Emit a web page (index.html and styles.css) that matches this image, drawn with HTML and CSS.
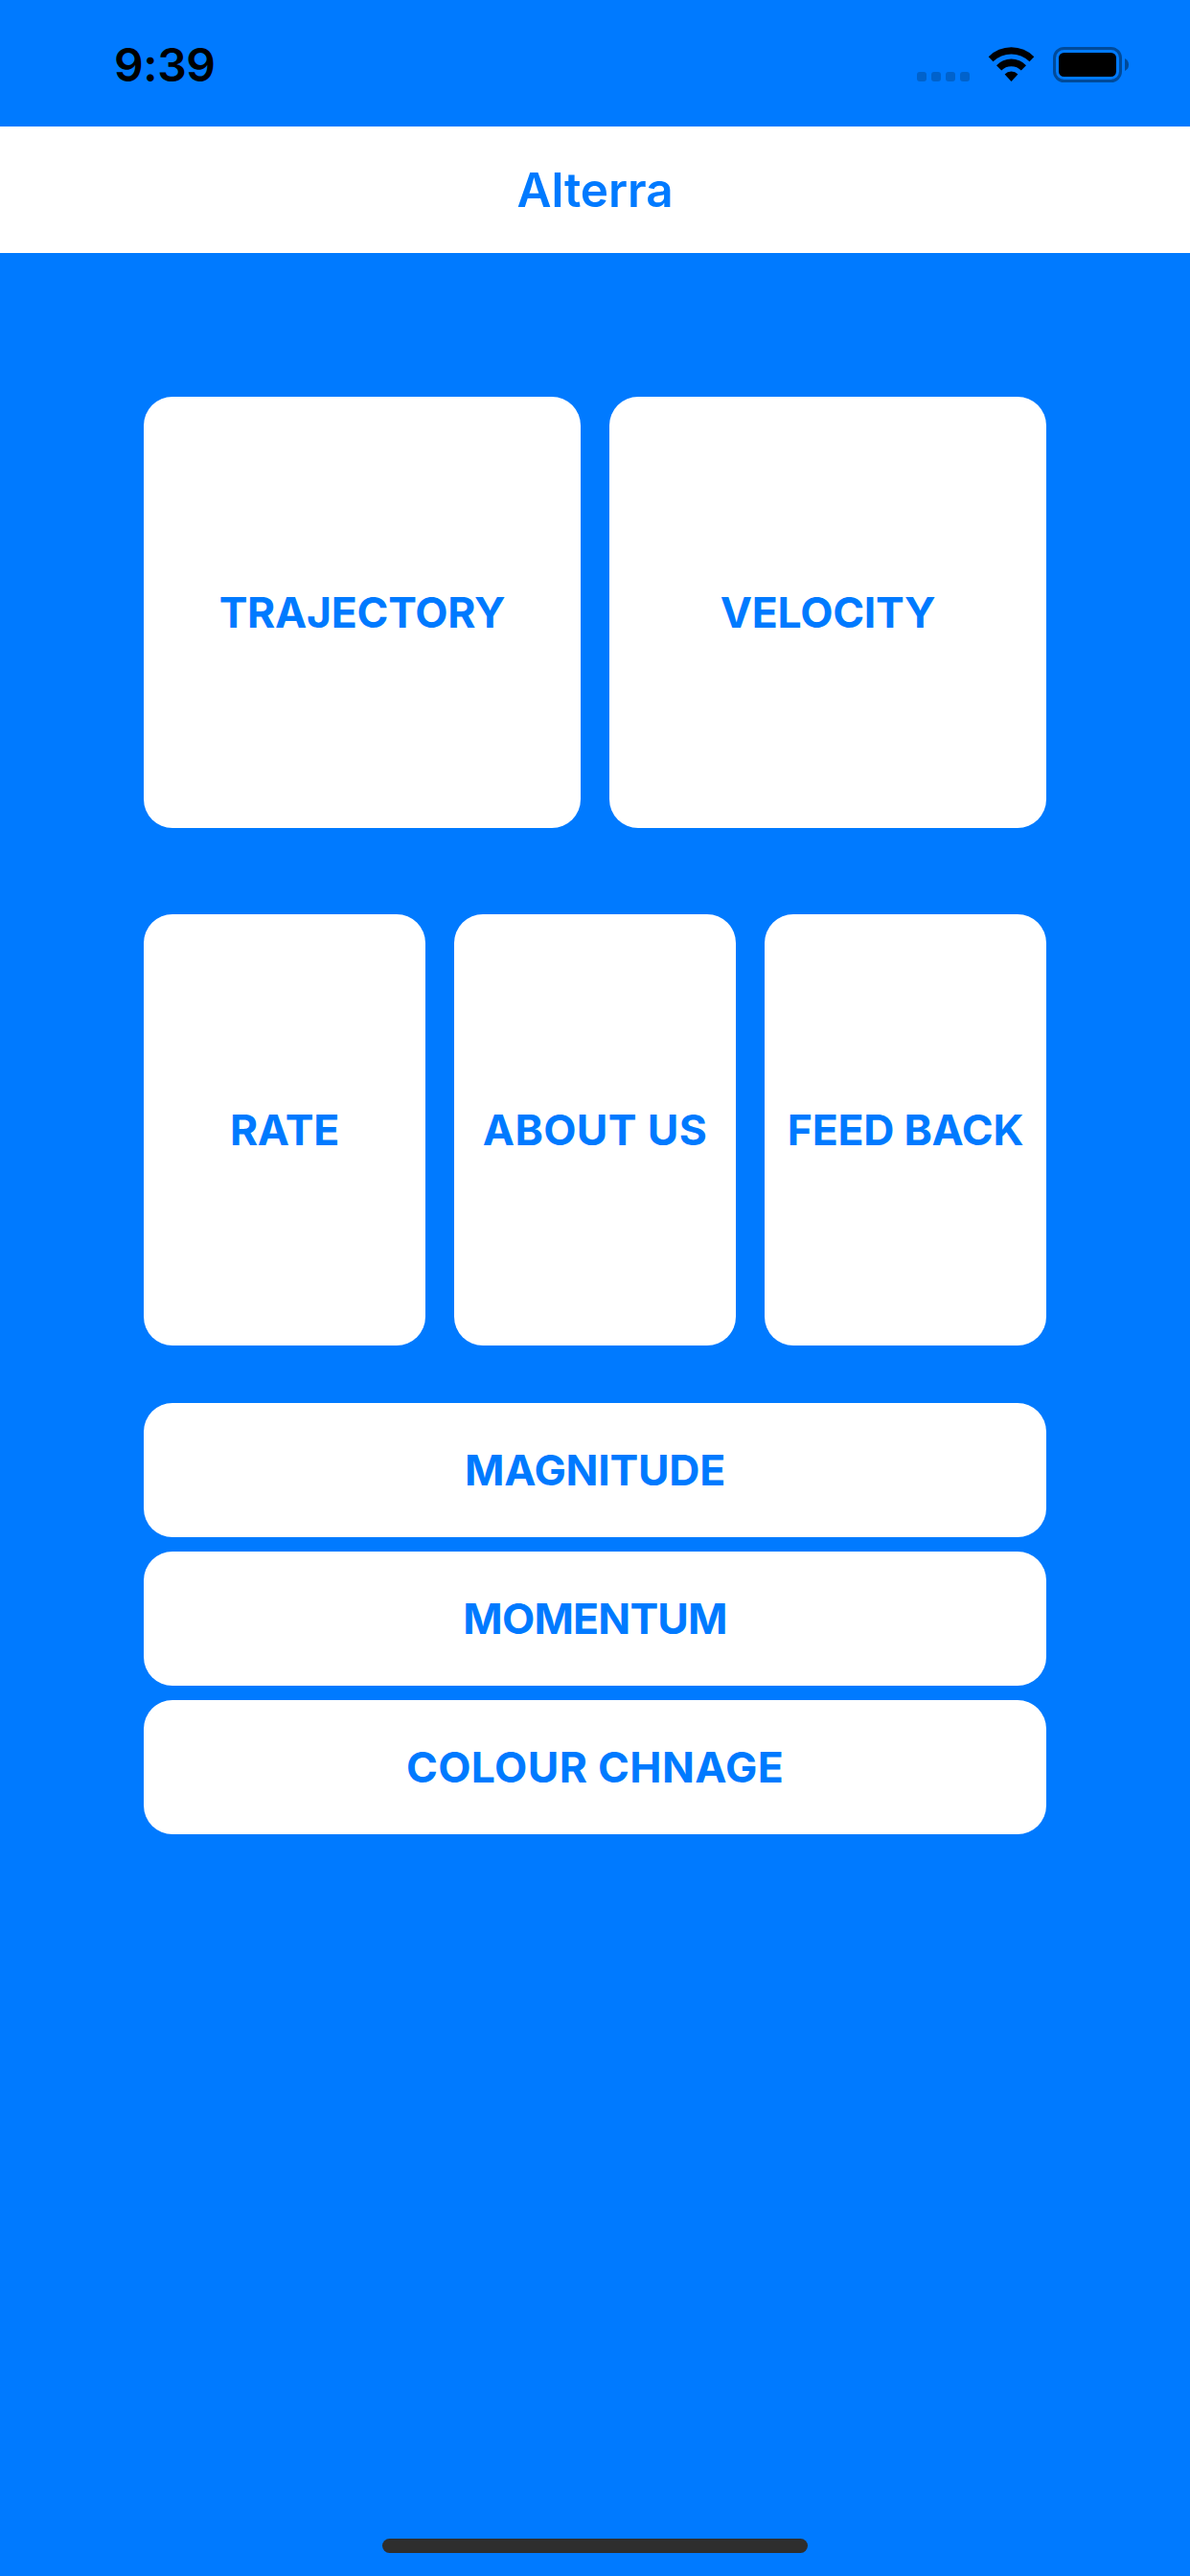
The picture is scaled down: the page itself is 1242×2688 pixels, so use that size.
FILE: index.html
```html
<!DOCTYPE html>
<html lang="en">
<head>
<meta charset="utf-8">
<title>Alterra</title>
<link rel="stylesheet" href="styles.css">
</head>
<body>
<div class="screen">
  <header class="status">
    <span class="time">9:39</span>
    <svg class="indicators" width="224" height="40" viewBox="0 0 224 40">
      <g fill="#0062cc">
        <rect x="0" y="27" width="10" height="10" rx="3"/>
        <rect x="15" y="27" width="10" height="10" rx="3"/>
        <rect x="30" y="27" width="10" height="10" rx="3"/>
        <rect x="45" y="27" width="10" height="10" rx="3"/>
      </g>
      <path d="M74.7 11.2A33.5 33.5 0 0 1 122.3 11.2L117.5 16.3A27 27 0 0 0 79.5 16.3Z"/>
      <path d="M83 20.2A21.5 21.5 0 0 1 114 20.2L108.8 25.6A14.5 14.5 0 0 0 88.2 25.6Z"/>
      <path d="M91.6 29.4A9.7 9.7 0 0 1 105.4 29.4L98.5 37Z"/>
      <rect x="143.5" y="2.5" width="69" height="34" rx="10" fill="none" stroke="#004a99" stroke-width="3"/>
      <rect x="148" y="7" width="60" height="25" rx="5.5"/>
      <path d="M217 13Q221 15 221 19.5Q221 24 217 26Z" fill="#004a99"/>
    </svg>
  </header>
  <h1 class="navbar">Alterra</h1>
  <main class="content">
    <div class="row">
      <button class="tile">TRAJECTORY</button>
      <button class="tile">VELOCITY</button>
    </div>
    <div class="row row-small">
      <button class="tile">RATE</button>
      <button class="tile loose">ABOUT US</button>
      <button class="tile">FEED BACK</button>
    </div>
    <div class="list">
      <button class="tile">MAGNITUDE</button>
      <button class="tile tight">MOMENTUM</button>
      <button class="tile loose">COLOUR CHNAGE</button>
    </div>
  </main>
  <div class="home"></div>
</div>
</body>
</html>
```
FILE: styles.css
```css
* { box-sizing: border-box; }
body { margin: 0; }
.screen { width: 1242px; height: 2688px; background: #007aff; display: flex; flex-direction: column; font-family: Inter, sans-serif; }
.status { height: 132px; display: flex; justify-content: space-between; padding: 47px 61px 0 119px; }
.time { font-size: 48px; line-height: 41px; font-weight: 600; letter-spacing: -0.4px; }
.indicators { margin-top: 1px; }
.navbar { margin: 0; height: 132px; background: #fff; color: #007aff; font-size: 49.5px; font-weight: 600; line-height: 132px; letter-spacing: -0.1px; text-align: center; }
.content { padding: 150px 150px 0; flex: 1; }
.row { display: flex; gap: 30px; height: 450px; }
.row-small { margin-top: 90px; }
.tile { flex: 1 1 0; min-width: 0; border: 0; padding: 0; border-radius: 30px; background: #fff; color: #007aff; font: 700 44.5px Inter, sans-serif; letter-spacing: -0.25px; white-space: nowrap; }
.loose { letter-spacing: 0.35px; }
.tight { letter-spacing: -0.8px; }
.list { display: flex; flex-direction: column; gap: 15px; height: 450px; margin-top: 60px; }
.home { width: 444px; height: 15px; border-radius: 8px; background: #2e2e2e; margin: 0 auto 24px; }
```
